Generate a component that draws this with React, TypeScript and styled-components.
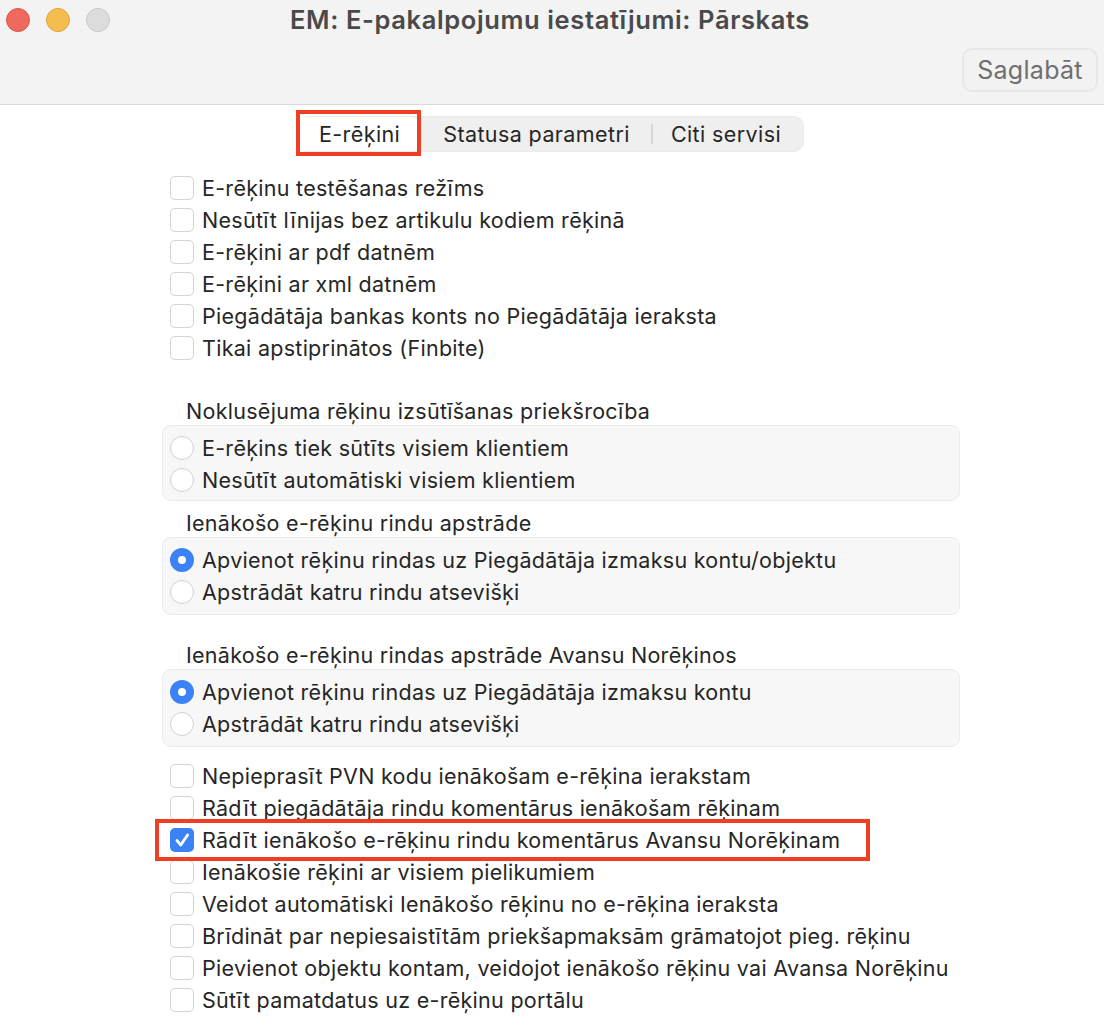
import styled, { createGlobalStyle } from "styled-components";

const GlobalStyle = createGlobalStyle`
  html, body {
    margin: 0;
    padding: 0;
    background: #ffffff;
  }
  body {
    font-family: Inter, "Liberation Sans", sans-serif;
    color: #262626;
  }
`;

const topChecks = [
  "E-rēķinu testēšanas režīms",
  "Nesūtīt līnijas bez artikulu kodiem rēķinā",
  "E-rēķini ar pdf datnēm",
  "E-rēķini ar xml datnēm",
  "Piegādātāja bankas konts no Piegādātāja ieraksta",
  "Tikai apstiprinātos (Finbite)",
];

const bottomChecks = [
  { label: "Nepieprasīt PVN kodu ienākošam e-rēķina ierakstam" },
  { label: "Rādīt piegādātāja rindu komentārus ienākošam rēķinam" },
  { label: "Rādīt ienākošo e-rēķinu rindu komentārus Avansu Norēķinam", checked: true },
  { label: "Ienākošie rēķini ar visiem pielikumiem" },
  { label: "Veidot automātiski Ienākošo rēķinu no e-rēķina ieraksta" },
  { label: "Brīdināt par nepiesaistītām priekšapmaksām grāmatojot pieg. rēķinu" },
  { label: "Pievienot objektu kontam, veidojot ienākošo rēķinu vai Avansa Norēķinu" },
  { label: "Sūtīt pamatdatus uz e-rēķinu portālu" },
];

const groups = [
  {
    title: "Noklusējuma rēķinu izsūtīšanas priekšrocība",
    gap: 33,
    tight: true,
    options: [
      { label: "E-rēķins tiek sūtīts visiem klientiem" },
      { label: "Nesūtīt automātiski visiem klientiem" },
    ],
  },
  {
    title: "Ienākošo e-rēķinu rindu apstrāde",
    gap: 8,
    options: [
      { label: "Apvienot rēķinu rindas uz Piegādātāja izmaksu kontu/objektu", selected: true },
      { label: "Apstrādāt katru rindu atsevišķi" },
    ],
  },
  {
    title: "Ienākošo e-rēķinu rindas apstrāde Avansu Norēķinos",
    gap: 26,
    options: [
      { label: "Apvienot rēķinu rindas uz Piegādātāja izmaksu kontu", selected: true },
      { label: "Apstrādāt katru rindu atsevišķi" },
    ],
  },
];

const CheckRow = ({ label, checked }: { label: string; checked?: boolean }) => (
  <Row>
    <CheckBox $checked={checked}>
      {checked && (
        <svg width="24" height="24" viewBox="0 0 24 24" fill="none">
          <path
            d="M7 12.6 L10.8 17 L17.6 7"
            stroke="#ffffff"
            strokeWidth="2.8"
            strokeLinecap="round"
            strokeLinejoin="round"
          />
        </svg>
      )}
    </CheckBox>
    <RowText>{label}</RowText>
  </Row>
);

const RadioRow = ({ label, selected }: { label: string; selected?: boolean }) => (
  <Row>
    <Radio $selected={selected} />
    <RowText>{label}</RowText>
  </Row>
);

export default function App() {
  return (
    <Window>
      <GlobalStyle />
      <TitleBar>
        <TitleRow>
          <Lights>
            <Light $fill="#ee6a5f" $edge="#d9574d" />
            <Light $fill="#f5bd4f" $edge="#e0a53a" />
            <Light $fill="#dcdcdc" $edge="#c8c8c8" />
          </Lights>
          <Title>EM: E-pakalpojumu iestatījumi: Pārskats</Title>
        </TitleRow>
        <Toolbar>
          <SaveButton>Saglabāt</SaveButton>
        </Toolbar>
      </TitleBar>

      <Content>
        <Tabs>
          <Tab $active $left={20} $right={19}>E-rēķini</Tab>
          <Tab $left={24} $right={21}>Statusa parametri</Tab>
          <TabDivider />
          <Tab $left={18} $right={20}>Citi servisi</Tab>
        </Tabs>

        <Form>
          <CheckList>
            {topChecks.map((label) => (
              <CheckRow key={label} label={label} />
            ))}
          </CheckList>

          {groups.map((group) => (
            <section key={group.title}>
              <GroupTitle $gap={group.gap}>{group.title}</GroupTitle>
              <GroupBox $tight={group.tight}>
                {group.options.map((option) => (
                  <RadioRow key={option.label} label={option.label} selected={option.selected} />
                ))}
              </GroupBox>
            </section>
          ))}

          <BottomList>
            {bottomChecks.map((item) => (
              <CheckRow key={item.label} label={item.label} checked={item.checked} />
            ))}
          </BottomList>
        </Form>

        <TabHighlight />
        <RowHighlight />
      </Content>
    </Window>
  );
}

const Window = styled.div`
  width: 1104px;
  height: 1034px;
  overflow: hidden;
  background: #ffffff;
`;

const TitleBar = styled.header`
  height: 104px;
  box-sizing: content-box;
  background: #f3f3f3;
  border-bottom: 1px solid #d8d8d8;
`;

const TitleRow = styled.div`
  display: grid;
  grid-template-columns: 1fr auto 1fr;
  align-items: center;
  height: 40px;
`;

const Lights = styled.div`
  display: flex;
  gap: 16px;
  padding-left: 6px;
`;

const Light = styled.span<{ $fill: string; $edge: string }>`
  width: 24px;
  height: 24px;
  box-sizing: border-box;
  border-radius: 50%;
  background: ${({ $fill }) => $fill};
  border: 1px solid ${({ $edge }) => $edge};
`;

const Title = styled.h1`
  margin: 0 0 2px;
  transform: translateX(-2px);
  font-size: 25.5px;
  font-weight: 600;
  letter-spacing: 0.62px;
  color: #4a4a4a;
  white-space: nowrap;
`;

const Toolbar = styled.div`
  display: flex;
  justify-content: flex-end;
  padding: 8px 6px 0 0;
`;

const SaveButton = styled.div`
  width: 136px;
  height: 44px;
  box-sizing: border-box;
  display: flex;
  align-items: center;
  justify-content: center;
  border: 2px solid #e7e7e7;
  border-radius: 10px;
  background: #f2f2f2;
  color: #6f6f6f;
  font-size: 25px;
  letter-spacing: 0.3px;
`;

const Content = styled.main`
  position: relative;
  padding-top: 11px;
`;

const Tabs = styled.nav`
  display: flex;
  align-items: stretch;
  width: 506px;
  height: 36px;
  box-sizing: border-box;
  margin: 0 0 0 298px;
  border: 1px solid #ebebeb;
  border-radius: 10px;
  background: #efefef;
`;

const Tab = styled.div<{ $active?: boolean; $left: number; $right: number }>`
  display: flex;
  align-items: center;
  padding: 0 ${({ $right }) => $right}px 0 ${({ $left }) => $left}px;
  border-radius: 8px;
  background: ${({ $active }) => ($active ? "#ffffff" : "transparent")};
  font-size: 21.5px;
  letter-spacing: 0.4px;
  color: #262626;
  white-space: nowrap;
`;

const TabDivider = styled.span`
  flex: none;
  align-self: center;
  width: 2px;
  height: 20px;
  background: #d6d6d6;
`;

const Form = styled.div`
  width: 798px;
  margin: 20px 0 0 162px;
`;

const CheckList = styled.div`
  display: flex;
  flex-direction: column;
`;

const BottomList = styled(CheckList)`
  margin-top: 13px;
`;

const Row = styled.div`
  display: flex;
  align-items: center;
  gap: 8px;
  height: 32px;
  padding-left: 8px;
`;

const RowText = styled.span`
  font-size: 21.5px;
  letter-spacing: 0.28px;
  color: #262626;
  white-space: nowrap;
`;

const CheckBox = styled.span<{ $checked?: boolean }>`
  flex: none;
  display: flex;
  align-items: center;
  justify-content: center;
  width: 24px;
  height: 24px;
  box-sizing: border-box;
  border-radius: 5px;
  border: ${({ $checked }) => ($checked ? "none" : "1px solid #d4d4d4")};
  background: ${({ $checked }) => ($checked ? "#3b82f7" : "#ffffff")};
`;

const Radio = styled.span<{ $selected?: boolean }>`
  flex: none;
  width: 24px;
  height: 24px;
  box-sizing: border-box;
  border-radius: 50%;
  border: ${({ $selected }) => ($selected ? "8px solid #3b82f7" : "1px solid #d0d0d0")};
  background: #ffffff;
`;

const GroupTitle = styled.div<{ $gap: number }>`
  display: flex;
  align-items: center;
  height: 28px;
  margin-top: ${({ $gap }) => $gap}px;
  padding-left: 24px;
  font-size: 21.5px;
  letter-spacing: 0.28px;
  color: #262626;
  white-space: nowrap;
`;

const GroupBox = styled.div<{ $tight?: boolean }>`
  padding: 6px 0 ${({ $tight }) => ($tight ? 4 : 6)}px;
  border: 1px solid #ebebeb;
  border-radius: 9px;
  background: #f7f7f7;

  ${Row} {
    padding-left: 7px;
  }
`;

const TabHighlight = styled.div`
  position: absolute;
  left: 296px;
  top: 5px;
  width: 125px;
  height: 46px;
  box-sizing: border-box;
  border: 4px solid #ee3f23;
`;

const RowHighlight = styled.div`
  position: absolute;
  left: 155px;
  top: 714px;
  width: 715px;
  height: 42px;
  box-sizing: border-box;
  border: 4px solid #ee3f23;
`;
